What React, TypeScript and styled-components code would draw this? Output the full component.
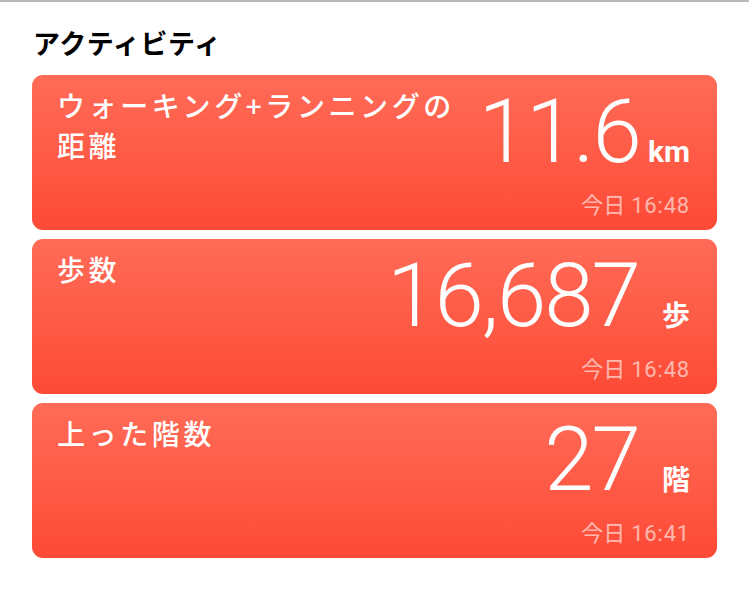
import styled, { createGlobalStyle } from "styled-components";

const GlobalStyle = createGlobalStyle`
  body {
    margin: 0;
    background: #fff;
    font-family: "Noto Sans CJK JP", sans-serif;
  }
`;

const TopRule = styled.div`
  height: 2px;
  background: #b9b9b9;
`;

const Page = styled.div`
  padding: 21px 32px 0 32px;
  display: flex;
  flex-direction: column;
`;

const Heading = styled.h2`
  margin: 0 0 12px 1px;
  font-size: 27px;
  font-weight: 700;
  color: #000;
  line-height: 40px;
  letter-spacing: 0.6px;
`;

const CardList = styled.div`
  display: flex;
  flex-direction: column;
  gap: 9px;
`;

const Card = styled.div`
  height: 155px;
  box-sizing: border-box;
  border-radius: 11px;
  background: linear-gradient(180deg, #ff6b57 0%, #fe5a45 55%, #fd4a35 100%);
  display: flex;
  justify-content: space-between;
  padding: 10px 27px 0 25px;
  color: #fff;
`;

const Label = styled.div`
  font-size: 28px;
  font-weight: 500;
  line-height: 40px;
  max-width: 420px;
  letter-spacing: 3.6px;
`;

const Reading = styled.div`
  display: flex;
  flex-direction: column;
  align-items: flex-end;
  flex-shrink: 0;
  padding-top: 1px;
`;

const ValueRow = styled.div`
  display: flex;
  align-items: baseline;
  height: 91px;
`;

const Value = styled.span`
  font-family: Roboto, "Liberation Sans", sans-serif;
  font-weight: 300;
  font-size: 89px;
  line-height: 92px;
  letter-spacing: -2px;
`;

const Unit = styled.span<{ $cjk?: boolean }>`
  font-family: ${(p) =>
    p.$cjk ? `"Noto Sans CJK JP", sans-serif` : `Roboto, "Liberation Sans", sans-serif`};
  font-weight: 700;
  font-size: ${(p) => (p.$cjk ? "28px" : "30px")};
  margin-left: ${(p) => (p.$cjk ? "23px" : "8px")};
`;

const Stamp = styled.div`
  margin-top: 10px;
  font-size: 22px;
  color: rgba(255, 255, 255, 0.6);
  font-family: "Noto Sans CJK JP", sans-serif;
`;

const Time = styled.span`
  font-family: Roboto, "Liberation Sans", sans-serif;
  margin-left: 6px;
  letter-spacing: 0.8px;
`;

interface Entry {
  label: string;
  value: string;
  unit: string;
  cjk: boolean;
  time: string;
}

const entries: Entry[] = [
  { label: "ウォーキング+ランニングの距離", value: "11.6", unit: "km", cjk: false, time: "16:48" },
  { label: "歩数", value: "16,687", unit: "歩", cjk: true, time: "16:48" },
  { label: "上った階数", value: "27", unit: "階", cjk: true, time: "16:41" },
];

export default function App() {
  return (
    <>
      <GlobalStyle />
      <TopRule />
      <Page>
        <Heading>アクティビティ</Heading>
        <CardList>
          {entries.map((e) => (
            <Card key={e.label}>
              <Label>{e.label}</Label>
              <Reading>
                <ValueRow>
                  <Value>{e.value}</Value>
                  <Unit $cjk={e.cjk}>{e.unit}</Unit>
                </ValueRow>
                <Stamp>
                  今日<Time>{e.time}</Time>
                </Stamp>
              </Reading>
            </Card>
          ))}
        </CardList>
      </Page>
    </>
  );
}
